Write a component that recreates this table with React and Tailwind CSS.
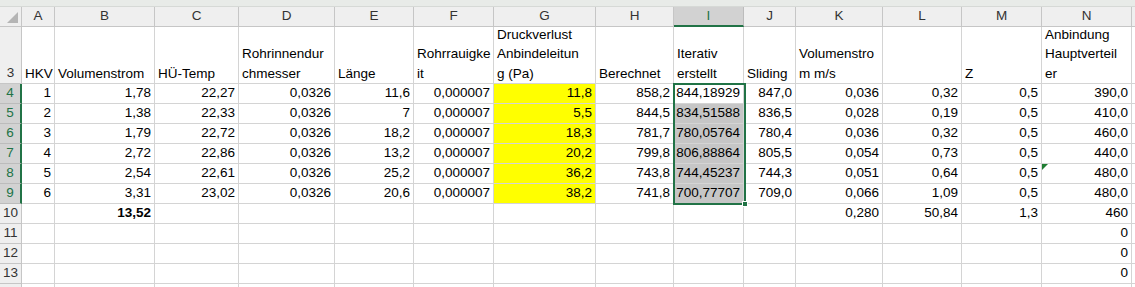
import React from 'react';

const COLS = ['A', 'B', 'C', 'D', 'E', 'F', 'G', 'H', 'I', 'J', 'K', 'L', 'M', 'N'];

// row 3 headers, wrapped the way Excel shows them
const HEAD = [
  ['HKV'],
  ['Volumenstrom'],
  ['HÜ-Temp'],
  ['Rohrinnendur', 'chmesser'],
  ['Länge'],
  ['Rohrrauigke', 'it'],
  ['Druckverlust', 'Anbindeleitun', 'g (Pa)'],
  ['Berechnet'],
  ['Iterativ', 'erstellt'],
  ['Sliding'],
  ['Volumenstro', 'm m/s'],
  [],
  ['Z'],
  ['Anbindung', 'Hauptverteil', 'er'],
];

const ROWS = [
  { n: 4, v: ['1', '1,78', '22,27', '0,0326', '11,6', '0,000007', '11,8', '858,2', '844,18929', '847,0', '0,036', '0,32', '0,5', '390,0'] },
  { n: 5, v: ['2', '1,38', '22,33', '0,0326', '7', '0,000007', '5,5', '844,5', '834,51588', '836,5', '0,028', '0,19', '0,5', '410,0'] },
  { n: 6, v: ['3', '1,79', '22,72', '0,0326', '18,2', '0,000007', '18,3', '781,7', '780,05764', '780,4', '0,036', '0,32', '0,5', '460,0'] },
  { n: 7, v: ['4', '2,72', '22,86', '0,0326', '13,2', '0,000007', '20,2', '799,8', '806,88864', '805,5', '0,054', '0,73', '0,5', '440,0'] },
  { n: 8, v: ['5', '2,54', '22,61', '0,0326', '25,2', '0,000007', '36,2', '743,8', '744,45237', '744,3', '0,051', '0,64', '0,5', '480,0'] },
  { n: 9, v: ['6', '3,31', '23,02', '0,0326', '20,6', '0,000007', '38,2', '741,8', '700,77707', '709,0', '0,066', '1,09', '0,5', '480,0'] },
  { n: 10, v: ['', '13,52', '', '', '', '', '', '', '', '', '0,280', '50,84', '1,3', '460'] },
  { n: 11, v: ['', '', '', '', '', '', '', '', '', '', '', '', '', '0'] },
  { n: 12, v: ['', '', '', '', '', '', '', '', '', '', '', '', '', '0'] },
  { n: 13, v: ['', '', '', '', '', '', '', '', '', '', '', '', '', '0'] },
  { n: 14, v: ['', '', '', '', '', '', '', '', '', '', '', '', '', ''] },
];

function RowHead({ n, sel, label = true }) {
  return (
    <div
      className={
        sel
          ? 'flex items-center justify-center bg-[#d2d2d2] text-[#217346] border-b border-[#bcbcbc] border-r-2 border-r-[#217346]'
          : 'flex items-center justify-center bg-[#efefef] text-[#333] border-b border-r border-[#c6c6c6]'
      }
    >
      {label ? n : ''}
    </div>
  );
}

export default function App() {
  return (
    <div className="w-[1135px] h-[287px] overflow-hidden bg-white text-[13.5px] text-black font-['Liberation_Sans',Arial,sans-serif]">
      <div className="h-[7px] bg-[#e8ebe8] border-b border-[#d6d9d6]" />
      <div className="relative grid grid-cols-[22px_33px_100px_84px_96px_79px_80px_102px_78px_70px_52px_87px_79px_80px_90px_1fr] grid-rows-[20px_57px_repeat(11,20px)]">
        {/* corner */}
        <div className="relative bg-[#efefef] border-r border-b border-[#c6c6c6]">
          <svg className="absolute left-[6px] top-[5px]" width="13" height="12" viewBox="0 0 13 12">
            <polygon points="1,11 12,11 12,0" fill="#b5b5b5" />
          </svg>
        </div>
        {COLS.map((c) => (
          <div
            key={c}
            className={
              c === 'I'
                ? 'flex items-center justify-center bg-[#d2d2d2] text-[#217346] border-r border-[#bcbcbc] border-b-2 border-b-[#217346]'
                : 'flex items-center justify-center bg-[#efefef] text-[#333] border-r border-b border-[#c6c6c6]'
            }
          >
            {c}
          </div>
        ))}
        <div className="bg-[#efefef] border-b border-[#c6c6c6]" />

        {/* row 3 */}
        <div className="flex items-end justify-center pb-[1px] leading-[19.5px] bg-[#efefef] text-[#333] border-b border-r border-[#c6c6c6]">3</div>
        {HEAD.map((lines, i) => (
          <div
            key={i}
            className="flex flex-col justify-end overflow-hidden whitespace-nowrap pl-[3px] leading-[19.5px] border-r border-b border-[#d4d4d4]"
          >
            {lines.map((l) => (
              <span key={l}>{l}</span>
            ))}
          </div>
        ))}
        <div className="border-b border-[#d4d4d4]" />

        {ROWS.map((r) => (
          <React.Fragment key={r.n}>
            <RowHead n={r.n} sel={r.n >= 4 && r.n <= 9} label={r.n < 14} />
            {r.v.map((val, i) => {
              const yellow = i === 6 && r.n <= 9;
              const grey = i === 8 && r.n >= 5 && r.n <= 9;
              return (
                <div
                  key={i}
                  className={
                    'relative flex items-center justify-end pr-[3px] whitespace-nowrap border-r border-b border-[#d4d4d4] ' +
                    (yellow ? 'bg-[#ffff00] ' : grey ? 'bg-[#c6c6c6] ' : '') +
                    (r.n === 10 && i === 1 ? 'font-bold' : '')
                  }
                >
                  {val}
                  {r.n === 8 && i === 13 && (
                    <svg className="absolute left-0 top-0" width="7" height="7" viewBox="0 0 7 7">
                      <polygon points="0,0 6,0 0,6" fill="#1e7d32" />
                    </svg>
                  )}
                </div>
              );
            })}
            <div className="border-b border-[#d4d4d4]" />
          </React.Fragment>
        ))}

        {/* selection frame I4:I9 with fill handle */}
        <div className="absolute left-[673px] top-[76px] w-[73px] h-[122px] border-2 border-[#217346] pointer-events-none" />
        <div className="absolute left-[742px] top-[194px] w-[6px] h-[6px] bg-[#217346] border border-white" />
      </div>
    </div>
  );
}
